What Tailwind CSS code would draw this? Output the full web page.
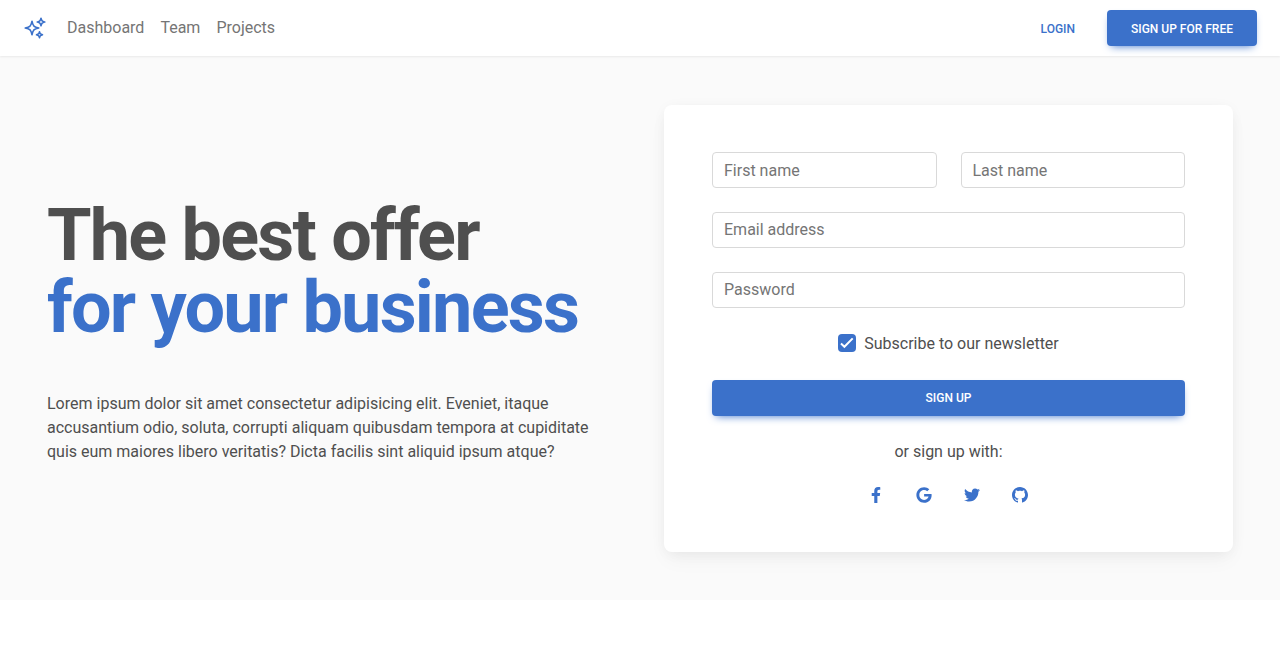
<!DOCTYPE html>
<html lang="en">
<head>
<meta charset="utf-8">
<title>Sign up</title>
<script src="https://cdn.jsdelivr.net/npm/@tailwindcss/browser@4"></script>
</head>
<body class="bg-white font-['Roboto',sans-serif] text-[#4f4f4f] text-base leading-6 overflow-hidden">
<nav class="relative flex h-14 items-center justify-between bg-white pl-[23px] pr-[23px] shadow-[0_1px_2px_0_rgba(0,0,0,0.07)]">
  <div class="flex items-center">
    <svg class="size-6 text-[#3b71ca]" viewBox="0 0 24 24" fill="none" stroke="currentColor" stroke-width="1.6" stroke-linecap="round" stroke-linejoin="round"><path d="M9.813 15.904L9 18.75l-.813-2.846a4.5 4.5 0 00-3.09-3.09L2.25 12l2.846-.813a4.5 4.5 0 003.09-3.09L9 5.25l.813 2.846a4.5 4.5 0 003.09 3.09L15.75 12l-2.846.813a4.5 4.5 0 00-3.09 3.09zM18.259 8.715L18 9.75l-.259-1.035a3.375 3.375 0 00-2.455-2.456L14.25 6l1.036-.259a3.375 3.375 0 002.455-2.456L18 2.25l.259 1.035a3.375 3.375 0 002.456 2.456L21.75 6l-1.035.259a3.375 3.375 0 00-2.456 2.456zM16.894 20.567L16.5 21.75l-.394-1.183a2.25 2.25 0 00-1.423-1.423L13.5 18.75l1.183-.394a2.25 2.25 0 001.423-1.423l.394-1.183.394 1.183a2.25 2.25 0 001.423 1.423l1.183.394-1.183.394a2.25 2.25 0 00-1.423 1.423z"/></svg>
    <div class="ml-5 flex gap-4 text-[#757575]">
      <a>Dashboard</a><a>Team</a><a>Projects</a>
    </div>
  </div>
  <div class="flex items-center text-xs font-medium uppercase">
    <a class="mr-8 pt-0.5 text-[#3b71ca]">Login</a>
    <button class="h-9 w-[150px] rounded bg-[#3b71ca] pt-0.5 text-xs font-medium uppercase text-white shadow-[0_4px_9px_-4px_#3b71ca]">Sign up for free</button>
  </div>
</nav>
<section class="flex h-[544px] items-center bg-[#fafafa] pl-[47px] pr-[47px]">
  <div class="w-[617px] shrink-0 pt-[7px]">
    <h1 class="mb-12 text-[72px] font-bold leading-[72px] tracking-[-0.025em]">The best offer<br><span class="text-[#3b71ca]">for your business</span></h1>
    <p class="w-[560px]">Lorem ipsum dolor sit amet consectetur adipisicing elit. Eveniet, itaque accusantium odio, soluta, corrupti aliquam quibusdam tempora at cupiditate quis eum maiores libero veritatis? Dicta facilis sint aliquid ipsum atque?</p>
  </div>
  <form class="h-[447px] w-[569px] shrink-0 rounded-lg bg-white px-12 pt-[47px] shadow-[0_2px_15px_-3px_rgba(0,0,0,0.07),0_10px_20px_-2px_rgba(0,0,0,0.04)]">
    <div class="mb-6 grid grid-cols-2 gap-6">
      <div class="flex h-9 items-center rounded border border-[#d9d9d9] px-[11px] pt-0.5 text-[#757575]">First name</div>
      <div class="flex h-9 items-center rounded border border-[#d9d9d9] px-[11px] pt-0.5 text-[#757575]">Last name</div>
    </div>
    <div class="mb-6 flex h-9 items-center rounded border border-[#d9d9d9] px-[11px] text-[#757575]">Email address</div>
    <div class="mb-6 flex h-9 items-center rounded border border-[#d9d9d9] px-[11px] text-[#757575]">Password</div>
    <div class="mb-6 flex items-center justify-center gap-2">
      <span class="mb-0.5 flex size-[18px] items-center justify-center rounded bg-[#3b71ca]"><svg class="size-[18px]" viewBox="0 0 18 18" fill="none" stroke="white" stroke-width="2"><path d="M3 9.6l3.4 3.2L14.7 4.4"/></svg></span>
      <span>Subscribe to our newsletter</span>
    </div>
    <button class="mb-6 block h-9 w-full rounded bg-[#3b71ca] text-xs font-medium uppercase text-white shadow-[0_4px_9px_-4px_#3b71ca]">Sign up</button>
    <p class="mb-6 text-center">or sign up with:</p>
    <div class="-mt-[0.5px] flex justify-center gap-8 pr-px text-[#3b71ca]">
      <svg class="size-4" viewBox="0 0 320 512" fill="currentColor"><path d="M279.14 288l14.22-92.66h-88.91v-60.13c0-25.35 12.42-50.06 52.24-50.06h40.42V6.26S260.43 0 225.36 0c-73.22 0-121.08 44.38-121.08 124.72v70.62H22.89V288h81.39v224h100.17V288z"/></svg>
      <svg class="size-4" viewBox="0 0 488 512" fill="currentColor"><path d="M488 261.8C488 403.3 391.1 504 248 504 110.8 504 0 393.2 0 256S110.8 8 248 8c66.8 0 123 24.5 166.3 64.9l-67.5 64.9C258.5 52.6 94.3 116.6 94.3 256c0 86.5 69.1 156.6 153.7 156.6 98.2 0 135-70.4 140.8-106.9H248v-85.3h236.1c2.3 12.7 3.9 24.9 3.9 41.4z"/></svg>
      <svg class="size-4" viewBox="0 0 24 24" fill="currentColor"><path d="M24 4.557c-.883.392-1.832.656-2.828.775 1.017-.609 1.798-1.574 2.165-2.724-.951.564-2.005.974-3.127 1.195-.897-.957-2.178-1.555-3.594-1.555-3.179 0-5.515 2.966-4.797 6.045-4.091-.205-7.719-2.165-10.148-5.144-1.29 2.213-.669 5.108 1.523 6.574-.806-.026-1.566-.247-2.229-.616-.054 2.281 1.581 4.415 3.949 4.89-.693.188-1.452.232-2.224.084.626 1.956 2.444 3.379 4.6 3.419-2.07 1.623-4.678 2.348-7.29 2.04 2.179 1.397 4.768 2.212 7.548 2.212 9.142 0 14.307-7.721 13.995-14.646.962-.695 1.797-1.562 2.457-2.549z"/></svg>
      <svg class="size-4" viewBox="0 0 24 24" fill="currentColor"><path d="M12 0c-6.626 0-12 5.373-12 12 0 5.302 3.438 9.8 8.207 11.387.599.111.793-.261.793-.577v-2.234c-3.338.726-4.033-1.416-4.033-1.416-.546-1.387-1.333-1.756-1.333-1.756-1.089-.745.083-.729.083-.729 1.205.084 1.839 1.237 1.839 1.237 1.07 1.834 2.807 1.304 3.492.997.107-.775.418-1.305.762-1.604-2.665-.305-5.467-1.334-5.467-5.931 0-1.311.469-2.381 1.236-3.221-.124-.303-.535-1.524.117-3.176 0 0 1.008-.322 3.301 1.23.957-.266 1.983-.399 3.003-.404 1.02.005 2.047.138 3.006.404 2.291-1.552 3.297-1.23 3.297-1.23.653 1.653.242 2.874.118 3.176.77.84 1.235 1.911 1.235 3.221 0 4.609-2.807 5.624-5.479 5.921.43.372.823 1.102.823 2.222v3.293c0 .319.192.694.801.576 4.765-1.589 8.199-6.086 8.199-11.386 0-6.627-5.373-12-12-12z"/></svg>
    </div>
  </form>
</section>
</body>
</html>
